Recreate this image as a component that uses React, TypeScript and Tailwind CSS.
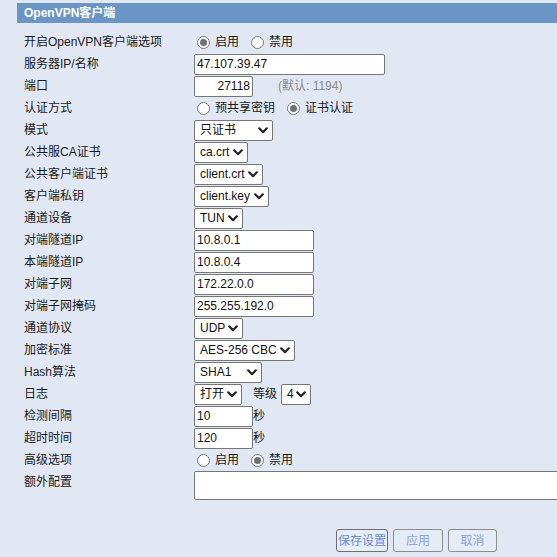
import React from 'react';

const font = "font-['Liberation_Sans','Noto_Sans_CJK_SC',sans-serif]";

function Radio({ checked, label }: { checked?: boolean; label: string }) {
  return (
    <label className="flex items-center mr-[9px] last:mr-0">
      <span className="ml-[3px] w-[13px] h-[13px] rounded-full border border-[#767676] bg-white flex items-center justify-center">
        {checked && <span className="w-[7px] h-[7px] rounded-full bg-[#707070]" />}
      </span>
      <span className="ml-[5px]">{label}</span>
    </label>
  );
}

function Select({ value, width }: { value: string; width: string }) {
  return (
    <div
      className={`${width} h-[21px] flex items-center justify-between pl-[5px] pr-[4px] bg-white border border-[#767676] rounded-[2px] text-[#111]`}
    >
      <span className="whitespace-nowrap">{value}</span>
      <svg width="10" height="7" viewBox="0 0 10 7" className="shrink-0">
        <polyline points="1.2,1.3 5,5.2 8.8,1.3" fill="none" stroke="#222" strokeWidth="2.2" strokeLinecap="round" strokeLinejoin="round" />
      </svg>
    </div>
  );
}

function Input({ value, width, right }: { value: string; width: string; right?: boolean }) {
  return (
    <input
      readOnly
      value={value}
      className={`${width} h-[21px] px-[2px] bg-white border border-[#767676] rounded-[2px] text-[12px] text-[#111] outline-none ${right ? 'text-right' : ''} ${font}`}
    />
  );
}

function Row({ label, children }: { label: string; children?: React.ReactNode }) {
  return (
    <>
      <div className="h-[22px] flex items-center whitespace-nowrap">{label}</div>
      <div className="h-[22px] flex items-center whitespace-nowrap">{children}</div>
    </>
  );
}

export default function App() {
  return (
    <div className={`w-[557px] h-[557px] overflow-hidden bg-[#e1e8f4] pl-[17px] pt-[3px] text-[12px] text-[#1a1a1a] ${font}`}>
      <div className="h-[20px] bg-[#6b95c5] text-white font-bold flex items-center pl-[7px]">OpenVPN客户端</div>

      <div className="grid grid-cols-[170px_1fr] pl-[7px] mt-[8px]">
        <Row label="开启OpenVPN客户端选项">
          <Radio checked label="启用" />
          <Radio label="禁用" />
        </Row>
        <Row label="服务器IP/名称">
          <Input value="47.107.39.47" width="w-[191px]" />
        </Row>
        <Row label="端口">
          <Input value="27118" width="w-[59px]" right />
          <span className="ml-[25px] text-[#8a8a8a]">(默认: 1194)</span>
        </Row>
        <Row label="认证方式">
          <Radio label="预共享密钥" />
          <Radio checked label="证书认证" />
        </Row>
        <Row label="模式">
          <Select value="只证书" width="w-[79px]" />
        </Row>
        <Row label="公共服CA证书">
          <Select value="ca.crt" width="w-[54px]" />
        </Row>
        <Row label="公共客户端证书">
          <Select value="client.crt" width="w-[69px]" />
        </Row>
        <Row label="客户端私钥">
          <Select value="client.key" width="w-[75px]" />
        </Row>
        <Row label="通道设备">
          <Select value="TUN" width="w-[49px]" />
        </Row>
        <Row label="对端隧道IP">
          <Input value="10.8.0.1" width="w-[120px]" />
        </Row>
        <Row label="本端隧道IP">
          <Input value="10.8.0.4" width="w-[120px]" />
        </Row>
        <Row label="对端子网">
          <Input value="172.22.0.0" width="w-[120px]" />
        </Row>
        <Row label="对端子网掩码">
          <Input value="255.255.192.0" width="w-[120px]" />
        </Row>
        <Row label="通道协议">
          <Select value="UDP" width="w-[49px]" />
        </Row>
        <Row label="加密标准">
          <Select value="AES-256 CBC" width="w-[101px]" />
        </Row>
        <Row label="Hash算法">
          <Select value="SHA1" width="w-[68px]" />
        </Row>
        <Row label="日志">
          <Select value="打开" width="w-[48px]" />
          <span className="ml-[11px]">等级</span>
          <span className="ml-[4px]">
            <Select value="4" width="w-[30px]" />
          </span>
        </Row>
        <Row label="检测间隔">
          <Input value="10" width="w-[59px]" />
          <span>秒</span>
        </Row>
        <Row label="超时时间">
          <Input value="120" width="w-[59px]" />
          <span>秒</span>
        </Row>
        <Row label="高级选项">
          <Radio label="启用" />
          <Radio checked label="禁用" />
        </Row>
        <div className="h-[22px] flex items-center">额外配置</div>
        <div>
          <textarea readOnly className="block w-[420px] h-[29px] bg-white border border-[#767676] rounded-[2px] resize-none outline-none" />
        </div>
      </div>

      <div className="flex gap-[5px] ml-[319px] mt-[29px] text-[12px] whitespace-nowrap">
        <button className="w-[52px] h-[23px] px-0 border border-[#6f6f6f] rounded-[3px] bg-[#e8eef8] text-[#6a8cd4]">保存设置</button>
        <button className="w-[50px] h-[23px] px-0 border border-[#8c8c8c] rounded-[3px] bg-[#e6ecf6] text-[#8aa3d6]">应用</button>
        <button className="w-[49px] h-[23px] px-0 border border-[#8c8c8c] rounded-[3px] bg-[#e6ecf6] text-[#8aa3d6]">取消</button>
      </div>
    </div>
  );
}
